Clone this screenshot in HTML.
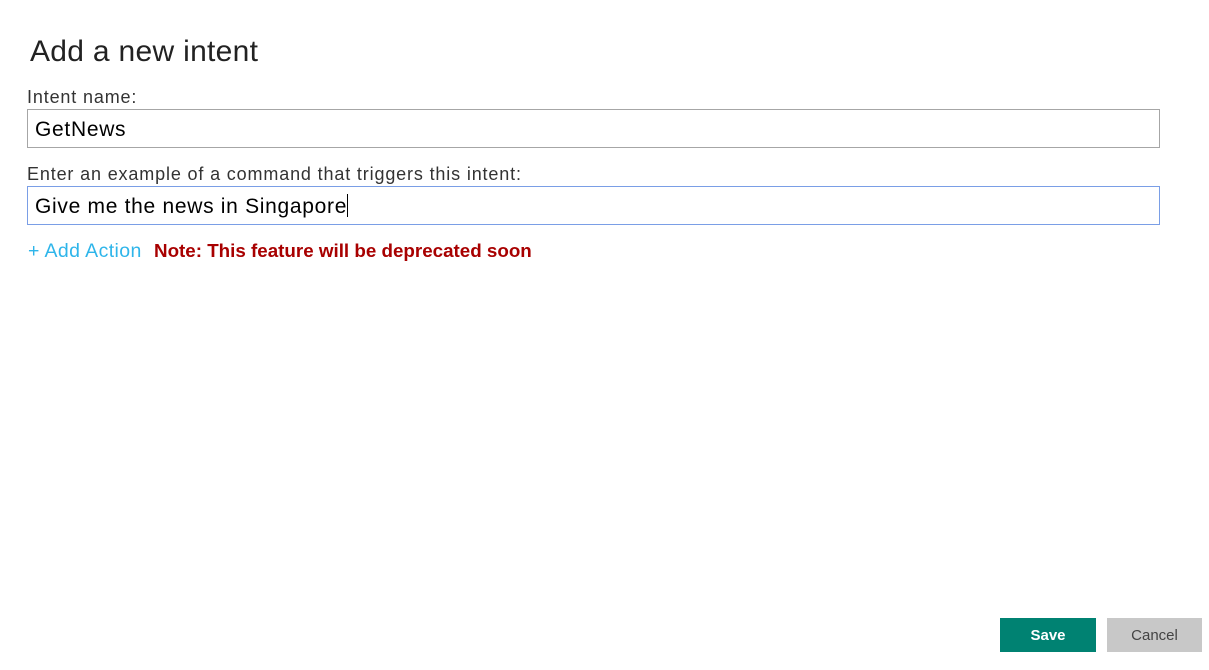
<!DOCTYPE html>
<html><head><style>
body{margin:0;width:1209px;height:670px;background:#fff;font-family:"Liberation Sans",sans-serif;position:relative;overflow:hidden}
.a{position:absolute;white-space:nowrap}
h1{position:absolute;left:30px;top:34px;margin:0;font-weight:normal;font-size:30px;color:#222;line-height:36px;letter-spacing:0.3px}
.l{font-size:18px;color:#333;line-height:20px;letter-spacing:0.85px}
.in{position:absolute;left:27px;height:37px;border:1px solid #a6a6a6;box-sizing:content-box;font-size:21px;color:#000;line-height:39px;padding-left:7px;width:1124px;letter-spacing:0.7px}
.btn{position:absolute;top:618px;height:34px;width:96px;font-size:15px;font-weight:bold;text-align:center;line-height:36px}
</style></head><body>
<h1>Add a new intent</h1>
<div class="a l" style="left:27px;top:87px">Intent name:</div>
<div class="in" style="top:109px">GetNews</div>
<div class="a l" style="left:27px;top:164px">Enter an example of a command that triggers this intent:</div>
<div class="in" style="top:186px;border-color:#7a9ee6">Give me the news in Singapore<span style="display:inline-block;width:1px;height:23px;background:#000;vertical-align:middle;margin-top:-4px"></span></div>
<div class="a" style="left:28px;top:240px;font-size:19.5px;color:#2eb5ea;line-height:22px;letter-spacing:0.4px">+ Add Action</div>
<div class="a" style="left:154px;top:240px;font-size:18.8px;color:#a80000;font-weight:bold;line-height:22px">Note: This feature will be deprecated soon</div>
<div class="btn" style="left:1000px;background:#008272;color:#fff">Save</div>
<div class="btn" style="left:1107px;width:95px;background:#c8c8c8;color:#444;font-weight:normal">Cancel</div>
</body></html>
